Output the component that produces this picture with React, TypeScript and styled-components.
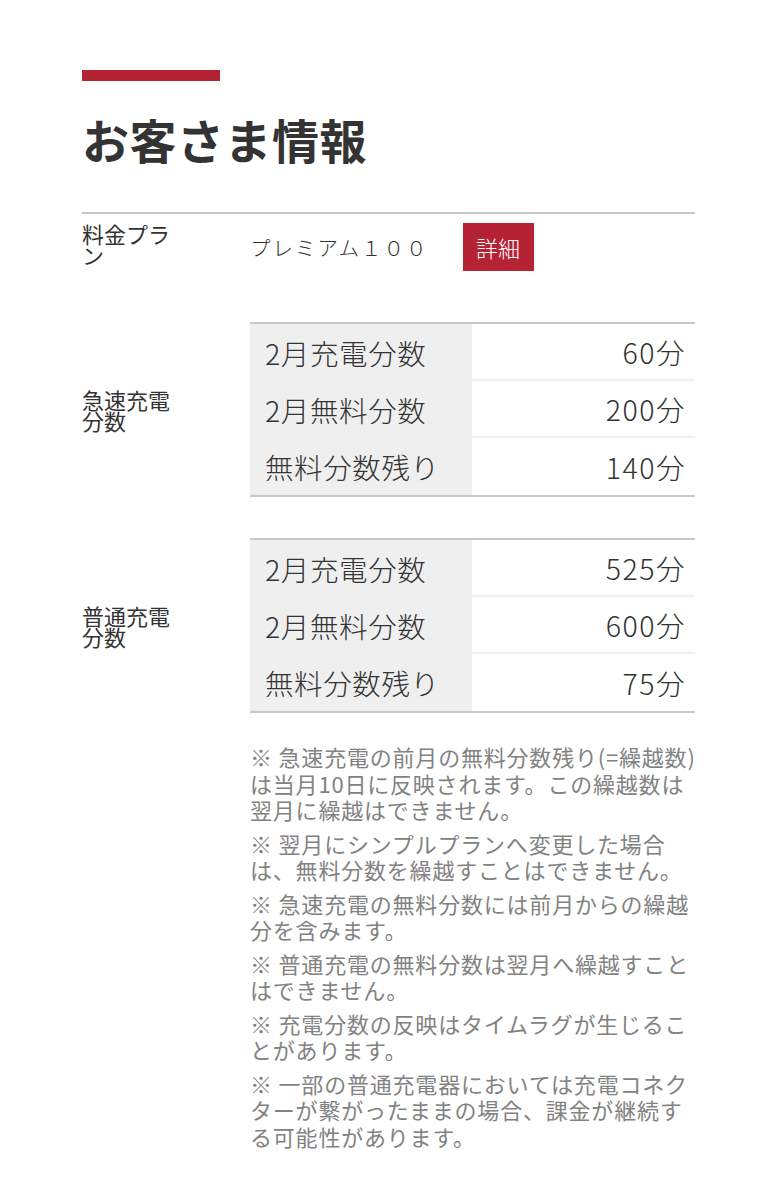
import { FC } from "react";
import styled, { createGlobalStyle } from "styled-components";

const GlobalStyle = createGlobalStyle`
  body {
    margin: 0;
    background: #fff;
    font-family: "Noto Sans CJK JP", "Noto Sans", sans-serif;
    color: #333;
  }
`;

const Page = styled.div`
  padding: 70px 82px 40px;
`;

const Accent = styled.div`
  width: 138px;
  height: 11px;
  background: #b52233;
`;

const Title = styled.h1`
  margin: 30px 0 45px;
  font-size: 47px;
  line-height: 56px;
  font-weight: bold;
  letter-spacing: 0.5px;
  color: #333;
`;

const Row = styled.div<{ $center?: boolean; $gap?: number }>`
  display: flex;
  align-items: ${(p) => (p.$center ? "center" : "flex-start")};
  margin-top: ${(p) => p.$gap ?? 0}px;
`;

const PlanRow = styled(Row)`
  border-top: 2px solid #c8c8c8;
  padding-top: 9px;
`;

const Label = styled.div`
  width: 168px;
  flex-shrink: 0;
  font-size: 22px;
  line-height: 21px;
  padding-right: 72px;
  box-sizing: border-box;
  color: #333;
`;

const PlanValue = styled.div`
  display: flex;
  align-items: center;
  gap: 34px;
  font-size: 20.5px;
  font-weight: 300;
  letter-spacing: 2px;
  color: #333;
`;

const DetailButton = styled.button`
  width: 71px;
  height: 48px;
  border: 0;
  background: #b52233;
  color: #fff;
  font-family: inherit;
  font-size: 22px;
  font-weight: 300;
  padding: 0;
`;

const Table = styled.div`
  flex: 1;
  border-top: 2px solid #c8c8c8;
  border-bottom: 2px solid #c8c8c8;
`;

const TableRow = styled.div`
  display: grid;
  grid-template-columns: 222px 1fr;
  height: 57px;
`;

const HeadCell = styled.div`
  background: #efefef;
  display: flex;
  align-items: center;
  padding-left: 15px;
  font-size: 28.5px;
  font-weight: 300;
  letter-spacing: 0.6px;
  color: #333;
`;

const ValueCell = styled.div<{ $last?: boolean }>`
  display: flex;
  align-items: center;
  justify-content: flex-end;
  padding-right: 9px;
  font-size: 28.5px;
  font-weight: 300;
  letter-spacing: 1.5px;
  color: #333;
  border-bottom: ${(p) => (p.$last ? "0" : "2px solid #f0f0f0")};
`;

const Notes = styled.div`
  margin: 30px 0 0 168px;
  color: #828282;
  font-size: 22px;
  line-height: 26.5px;
  letter-spacing: 0.8px;
`;

const Note = styled.p`
  margin: 0 0 7px;
  white-space: nowrap;
`;

type Item = { name: string; value: string };

const quick: Item[] = [
  { name: "2月充電分数", value: "60分" },
  { name: "2月無料分数", value: "200分" },
  { name: "無料分数残り", value: "140分" },
];

const normal: Item[] = [
  { name: "2月充電分数", value: "525分" },
  { name: "2月無料分数", value: "600分" },
  { name: "無料分数残り", value: "75分" },
];

const notes: string[][] = [
  ["※ 急速充電の前月の無料分数残り(=繰越数)", "は当月10日に反映されます。この繰越数は", "翌月に繰越はできません。"],
  ["※ 翌月にシンプルプランへ変更した場合", "は、無料分数を繰越すことはできません。"],
  ["※ 急速充電の無料分数には前月からの繰越", "分を含みます。"],
  ["※ 普通充電の無料分数は翌月へ繰越すこと", "はできません。"],
  ["※ 充電分数の反映はタイムラグが生じるこ", "とがあります。"],
  ["※ 一部の普通充電器においては充電コネク", "ターが繋がったままの場合、課金が継続す", "る可能性があります。"],
];

const MinutesTable: FC<{ items: Item[] }> = ({ items }) => (
  <Table>
    {items.map((item, i) => (
      <TableRow key={item.name}>
        <HeadCell>{item.name}</HeadCell>
        <ValueCell $last={i === items.length - 1}>{item.value}</ValueCell>
      </TableRow>
    ))}
  </Table>
);

export default function App() {
  return (
    <Page>
      <GlobalStyle />
      <Accent />
      <Title>お客さま情報</Title>

      <PlanRow>
        <Label>料金プラン</Label>
        <PlanValue>
          プレミアム１００
          <DetailButton>詳細</DetailButton>
        </PlanValue>
      </PlanRow>

      <Row $center $gap={51}>
        <Label>急速充電分数</Label>
        <MinutesTable items={quick} />
      </Row>

      <Row $center $gap={41}>
        <Label>普通充電分数</Label>
        <MinutesTable items={normal} />
      </Row>

      <Notes>
        {notes.map((lines, i) => (
          <Note key={i}>
            {lines.map((l, j) => (
              <span key={j}>
                {l}
                {j < lines.length - 1 && <br />}
              </span>
            ))}
          </Note>
        ))}
      </Notes>
    </Page>
  );
}
